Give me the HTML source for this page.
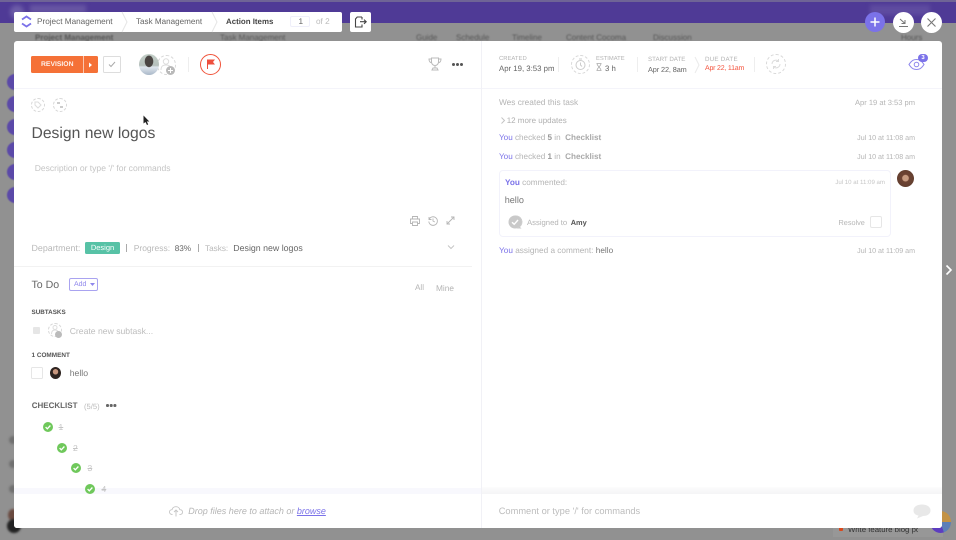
<!DOCTYPE html>
<html><head><meta charset="utf-8"><style>
html,body{margin:0;padding:0;width:956px;height:540px;overflow:hidden;background:#919191;font-family:"Liberation Sans",sans-serif;text-rendering:geometricPrecision}
#r{position:relative;width:956px;height:540px;overflow:hidden;filter:blur(.3px)}
.a{position:absolute;white-space:nowrap}
.g{color:#b4b4b4}.p{color:#7b72e9}
svg{position:absolute;overflow:visible}
.c{border-radius:50%}
.dash{position:absolute;border:1px dashed #d8d8d8;border-radius:50%;box-sizing:border-box}
.sep{position:absolute;width:1px;background:#eee}
.bk{font-size:8px;color:#555;top:33px;filter:blur(.8px)}
.pu{left:7px;width:16px;height:16px;background:#5b49a8;filter:blur(.6px)}
</style></head><body><div id="r">
<div class="a" style="left:0;top:0;width:956px;height:23px;background:#4f3a96"></div>
<div class="a" style="left:0;top:0;width:956px;height:2px;background:#6f6496"></div>
<div class="a" style="left:10px;top:5px;width:14px;height:14px;border-radius:50%;background:#6d5da8;filter:blur(2px)"></div>
<div class="a" style="left:30px;top:5px;width:56px;height:8px;background:#6756a3;filter:blur(2px)"></div>
<div class="a" style="left:870px;top:5px;width:60px;height:10px;background:#5f4ca0;filter:blur(2px)"></div>
<div class="a bk" style="left:35px;font-weight:bold">Project Management</div>
<div class="a bk" style="left:220px">Task Management</div>
<div class="a bk" style="left:416px">Guide</div>
<div class="a bk" style="left:456px">Schedule</div>
<div class="a bk" style="left:512px">Timeline</div>
<div class="a bk" style="left:566px">Content Cocoma</div>
<div class="a bk" style="left:653px">Discussion</div>
<div class="a bk" style="left:901px">Hours</div>
<div class="a c pu" style="top:74px"></div>
<div class="a c pu" style="top:96px"></div>
<div class="a c pu" style="top:119px"></div>
<div class="a c pu" style="top:142px"></div>
<div class="a c pu" style="top:164px"></div>
<div class="a c pu" style="top:187px"></div>
<div class="a c" style="left:9px;top:436px;width:8px;height:8px;background:#707070;filter:blur(1px)"></div>
<div class="a c" style="left:9px;top:460px;width:8px;height:8px;background:#707070;filter:blur(1px)"></div>
<div class="a c" style="left:9px;top:485px;width:8px;height:8px;background:#707070;filter:blur(1px)"></div>
<div class="a c" style="left:8px;top:509px;width:10px;height:12px;background:#6a4a40;filter:blur(1px)"></div>
<div class="a c" style="left:7px;top:519px;width:14px;height:14px;background:#222;filter:blur(1px)"></div>

<!-- outside bottom-right, behind modal -->
<div class="a" style="left:833px;top:526px;width:110px;height:11px;background:#979797"></div>
<div class="a" style="left:839px;top:527px;width:4px;height:4px;background:#d9481c;border-radius:1px"></div>
<div class="a" style="left:848px;top:524.500px;font-size:7.800px;color:#333;width:70px;overflow:hidden">Write feature blog post</div>
<div class="a c" style="left:930px;top:511px;width:21px;height:22px;background:conic-gradient(#c39245 0 25%,#5d7fb8 25% 45%,#5d3dc0 45% 80%,#c39245 80%)"></div>

<!-- breadcrumb -->
<div class="a" style="left:14px;top:12px;width:328px;height:20px;background:#fff;border-radius:2px"></div>
<svg style="left:20px;top:15px" width="13" height="13" viewBox="0 0 13 13"><path d="M2 4.500L6.500 1.500L11 4.500" fill="none" stroke="#7b72e9" stroke-width="1.800"/><path d="M2 8.500L6.500 11.500L11 8.500" fill="none" stroke="#7b72e9" stroke-width="1.800"/></svg>
<div class="a" style="left:37px;top:16.500px;font-size:8.200px;color:#666">Project Management</div>
<svg style="left:121px;top:12px" width="8" height="20"><path d="M1 0L6 10L1 20" fill="none" stroke="#e6e6e6"/></svg>
<div class="a" style="left:136px;top:16.500px;font-size:8.100px;color:#666">Task Management</div>
<svg style="left:211px;top:12px" width="8" height="20"><path d="M1 0L6 10L1 20" fill="none" stroke="#e6e6e6"/></svg>
<div class="a" style="left:226px;top:16.500px;font-size:7.900px;color:#444;font-weight:bold">Action Items</div>
<div class="a" style="left:290px;top:16px;width:20px;height:11px;border:1px solid #efeffa;box-sizing:border-box;border-radius:2px"></div>
<div class="a" style="left:298.500px;top:16.500px;font-size:8.200px;color:#666">1</div>
<div class="a" style="left:316px;top:16.500px;font-size:8.200px;color:#bbb">of 2</div>
<div class="a" style="left:350px;top:12px;width:21px;height:20px;background:#fff;border-radius:2px"></div>
<svg style="left:354px;top:16px" width="13" height="12" viewBox="0 0 13 12"><path d="M8 1H3.200L1.500 3v8h6.500V8.500M6 5.700h6M10 3.600l2.200 2.100L10 7.800M8 1v2.500" fill="none" stroke="#444" stroke-width="1.100"/></svg>

<!-- right circle buttons -->
<div class="a c" style="left:865px;top:12px;width:20px;height:20px;background:#7b72e9"></div>
<svg style="left:865px;top:12px" width="20" height="20"><path d="M10 5.500v9M5.500 10h9" stroke="#fff" stroke-width="1.500"/></svg>
<div class="a c" style="left:893px;top:12px;width:21px;height:21px;background:#fff"></div>
<svg style="left:893px;top:12px" width="21" height="21"><path d="M7 7l5 4.500M12 8v3.500H8.500M6 14.500h9" fill="none" stroke="#777" stroke-width="1"/></svg>
<div class="a c" style="left:921px;top:12px;width:21px;height:21px;background:#fff"></div>
<svg style="left:921px;top:12px" width="21" height="21"><path d="M6.500 6.500l8 8M14.500 6.500l-8 8" stroke="#777" stroke-width="1.100"/></svg>

<!-- modal -->
<div class="a" style="left:14px;top:41px;width:928px;height:487px;background:#fff;border-radius:3px"></div>
<div class="a" style="left:14px;top:88px;width:928px;height:1px;background:#f4f4fa"></div>
<div class="a" style="left:481px;top:41px;width:1px;height:487px;background:#f1f1f6"></div>
<div class="a" style="left:14px;top:488px;width:467px;height:6px;background:#f8f8fd"></div>
<div class="a" style="left:482px;top:487px;width:460px;height:7px;background:linear-gradient(#fcfcfc,#f4f4f6)"></div>

<!-- status -->
<div class="a" style="left:31px;top:56px;width:67px;height:17px;background:#f57137;border-radius:1.500px"></div>
<div class="a" style="left:83px;top:56px;width:1px;height:17px;background:#fff;opacity:.6"></div>
<div class="a" style="left:41px;top:61px;font-size:6.800px;color:#fff;font-weight:bold;opacity:.9">REVISION</div>
<svg style="left:88px;top:62px" width="5" height="6"><path d="M1 .5L4 3L1 5.500Z" fill="#fff"/></svg>
<div class="a" style="left:103px;top:56px;width:18px;height:17px;border:1px solid #ddd;box-sizing:border-box;border-radius:1.500px"></div>
<svg style="left:108px;top:61px" width="8" height="7"><path d="M1 3.500L3 5.500L7 1" fill="none" stroke="#aaa" stroke-width="1"/></svg>
<div class="dash" style="left:157px;top:55px;width:19px;height:20px;background:#fff"></div>
<div class="a c" style="left:139px;top:54px;width:20px;height:21px;background:radial-gradient(ellipse at 50% 35%,#4a4543 0 28%,transparent 32%),linear-gradient(#c3cfc8,#b6c0bc 55%,#dfe6ee 62%,#a9b8c8)"></div>
<svg style="left:160px;top:58px" width="12" height="14"><circle cx="6" cy="3.500" r="2.700" fill="none" stroke="#ddd"/><path d="M1 12c0-4 2-5 5-5s5 1 5 5" fill="none" stroke="#ddd"/></svg>
<div class="a c" style="left:166px;top:66px;width:9px;height:9px;background:#b9b9b9"></div>
<svg style="left:166px;top:66px" width="9" height="9"><path d="M4.500 2v5M2 4.500h5" stroke="#fff" stroke-width="1"/></svg>
<div class="sep" style="left:188px;top:57px;height:15px"></div>
<div class="a c" style="left:200px;top:54px;width:21px;height:21px;border:1px solid #f0533a;box-sizing:border-box"></div>
<svg style="left:206px;top:59px" width="11" height="11"><path d="M1 .5h8L7 3l2 2.500H2V10H1Z" fill="#ee4f3d"/></svg>
<svg style="left:428px;top:57px" width="14" height="14" viewBox="0 0 14 14"><path d="M3.500 1h7v4a3.500 3.500 0 0 1-7 0ZM3.500 2H1c0 2.500 1 3.500 2.700 3.800M10.500 2H13c0 2.500-1 3.500-2.700 3.800M7 8.500V11M4 13l1-2h4l1 2Z" fill="none" stroke="#bbb" stroke-width="1"/></svg>
<div class="a" style="left:452px;top:63px;width:3px;height:3px;border-radius:50%;background:#555;box-shadow:4px 0 #555,8px 0 #555"></div>

<!-- header right -->
<div class="a" style="left:499px;top:55.500px;font-size:5.900px;color:#b4b4b4">CREATED</div>
<div class="a" style="left:499px;top:64px;font-size:7.800px;color:#666">Apr 19, 3:53 pm</div>
<div class="sep" style="left:558px;top:57px;height:15px"></div>
<div class="dash" style="left:571px;top:55px;width:19px;height:19px"></div>
<svg style="left:574px;top:58px" width="13" height="13"><circle cx="6.500" cy="7" r="4.500" fill="none" stroke="#ccc"/><path d="M6.500 4.500V7L8 8.500M5 1h3" fill="none" stroke="#ccc"/></svg>
<div class="a" style="left:596px;top:55.500px;font-size:5.800px;color:#b4b4b4">ESTIMATE</div>
<svg style="left:596px;top:63px" width="6" height="8"><path d="M.5 .5h5M.5 7.500h5M1 .5c0 2.500 4 4.500 4 7M5 .5c0 2.500-4 4.500-4 7" fill="none" stroke="#aaa" stroke-width=".8"/></svg>
<div class="a" style="left:605px;top:64px;font-size:7.800px;color:#666">3 h</div>
<div class="sep" style="left:637px;top:57px;height:15px"></div>
<div class="a" style="left:648px;top:56px;font-size:6.200px;color:#b4b4b4">START DATE</div>
<div class="a" style="left:648px;top:64.500px;font-size:7.300px;color:#666;letter-spacing:-.1px">Apr 22, 8am</div>
<svg style="left:694px;top:57px" width="6" height="16"><path d="M1 0L5 8L1 16" fill="none" stroke="#eaeaea"/></svg>
<div class="a" style="left:705px;top:56px;font-size:6.200px;color:#b4b4b4;letter-spacing:.25px">DUE DATE</div>
<div class="a" style="left:705px;top:64.500px;font-size:7px;color:#f4533d;letter-spacing:-.2px">Apr 22, 11am</div>
<div class="sep" style="left:754px;top:57px;height:15px"></div>
<div class="dash" style="left:766px;top:54px;width:20px;height:20px"></div>
<svg style="left:771px;top:59px" width="10" height="10"><path d="M1 5a4 4 0 0 1 6.500-3M9 5a4 4 0 0 1-6.500 3M7.500 0v2.500H5M2.500 10V7.500H5" fill="none" stroke="#ddd"/></svg>
<svg style="left:908px;top:58px" width="18" height="13"><path d="M1 6.500C4 2 6 1.500 8.500 1.500S13 2 16 6.500C13 11 11 11.500 8.500 11.500S4 11 1 6.500Z" fill="none" stroke="#8f87ec" stroke-width="1.100"/><circle cx="8.500" cy="6.500" r="2.300" fill="none" stroke="#8f87ec"/></svg>
<div class="a" style="left:918px;top:54px;width:10px;height:8px;background:#7b72e9;border-radius:4px;color:#fff;font-size:6px;line-height:8px;text-align:center;font-weight:bold">3</div>

<!-- left content -->
<div class="dash" style="left:31px;top:98px;width:14px;height:14px"></div>
<svg style="left:34px;top:101px" width="8" height="8"><path d="M1 1h3l3 3-3 3-3-3Z" fill="none" stroke="#ddd"/></svg>
<div class="dash" style="left:53px;top:98px;width:14px;height:14px"></div>
<svg style="left:56px;top:101px" width="8" height="8"><path d="M1 1h3v2H1ZM4 5h3v2H4Z" fill="#ccc"/></svg>
<svg style="left:143px;top:115px" width="7" height="11"><path d="M.5 .5V8.500L2.500 7L4 10L5.200 9.400L3.800 6.500H6.300Z" fill="#222"/></svg>
<div class="a" style="left:31.500px;top:124.500px;font-size:15.700px;color:#555">Design new logos</div>
<div class="a" style="left:34.700px;top:163px;font-size:8.550px;color:#c4c4c4">Description or type '/' for commands</div>
<svg style="left:410px;top:216px" width="10" height="10"><path d="M2.500 3V.5h5V3M2.500 7.500H.5V3h9v4.500h-2M2.500 6h5v3.500h-5Z" fill="none" stroke="#b5b5b5" stroke-width=".9"/></svg>
<svg style="left:428px;top:216px" width="10" height="10"><path d="M1.200 3.200A4.300 4.300 0 1 1 .8 5.500M1 1v2.500h2.500M5 2.500V5l1.800 1" fill="none" stroke="#b5b5b5" stroke-width=".9"/></svg>
<svg style="left:446px;top:216px" width="9" height="9"><path d="M1 8L8 1M5 1h3v3M1 5v3h3" fill="none" stroke="#b5b5b5" stroke-width=".9"/></svg>
<div class="a" style="left:31.500px;top:243px;font-size:8.900px;color:#b9b9b9">Department:</div>
<div class="a" style="left:85px;top:242px;width:35px;height:11.500px;background:#57c2a6;border-radius:1.500px;color:#fff;font-size:7.500px;line-height:11.500px;text-align:center">Design</div>
<div class="a" style="left:126px;top:244px;width:1px;height:8px;background:#aaa"></div>
<div class="a" style="left:133.700px;top:243px;font-size:8.500px;color:#b9b9b9">Progress:</div>
<div class="a" style="left:174.700px;top:243.500px;font-size:8.200px;color:#666">83%</div>
<div class="a" style="left:198px;top:244px;width:1px;height:8px;background:#aaa"></div>
<div class="a" style="left:205px;top:243.500px;font-size:8.200px;color:#b9b9b9">Tasks:</div>
<div class="a" style="left:233.300px;top:243px;font-size:8.800px;color:#666">Design new logos</div>
<svg style="left:447px;top:245px" width="8" height="5"><path d="M1 .5L4 3.500L7 .5" fill="none" stroke="#c5c5c5"/></svg>
<div class="a" style="left:14px;top:266px;width:458px;height:1px;background:#f2f2f2"></div>

<div class="a" style="left:31.500px;top:278.500px;font-size:10.600px;color:#666">To Do</div>
<div class="a" style="left:69px;top:278px;width:29px;height:12.500px;border:1px solid #a9a3f0;box-sizing:border-box;border-radius:2px"></div>
<div class="a" style="left:74px;top:280.500px;font-size:7px;color:#8f87ec">Add</div>
<svg style="left:90px;top:283px" width="5" height="3"><path d="M0 0h5L2.500 3Z" fill="#8f87ec"/></svg>
<div class="a" style="left:415px;top:283px;font-size:8.100px;color:#b5b5b5">All</div>
<div class="a" style="left:436px;top:283px;font-size:8.300px;color:#b5b5b5">Mine</div>

<div class="a" style="left:31.500px;top:308.500px;font-size:6.300px;color:#555;font-weight:bold">SUBTASKS</div>
<div class="a" style="left:33px;top:327px;width:7px;height:7px;background:#e6e6e6;border-radius:1px"></div>
<div class="dash" style="left:48px;top:323px;width:14px;height:14px"></div>
<svg style="left:51px;top:325px" width="8" height="10"><circle cx="4" cy="2.500" r="2" fill="none" stroke="#ddd"/><path d="M.5 9c0-3 1.500-4 3.500-4s3.500 1 3.500 4" fill="none" stroke="#ddd"/></svg>
<div class="a c" style="left:55px;top:331px;width:7px;height:7px;background:#bbb"></div>
<div class="a" style="left:69.700px;top:326px;font-size:8.650px;color:#bdbdbd">Create new subtask...</div>

<div class="a" style="left:31.500px;top:352px;font-size:6.400px;color:#555;font-weight:bold">1 COMMENT</div>
<div class="a" style="left:31px;top:367px;width:12px;height:12px;border:1px solid #e6e6e6;box-sizing:border-box;border-radius:1.500px"></div>
<div class="a c" style="left:50px;top:367px;width:11px;height:12px;background:radial-gradient(circle at 50% 40%,#c9977e 0 28%,#2e2420 32%)"></div>
<div class="a" style="left:69.700px;top:368px;font-size:8.700px;color:#777">hello</div>

<div class="a" style="left:31.700px;top:400.500px;font-size:8px;color:#666;font-weight:bold">CHECKLIST</div>
<div class="a" style="left:84px;top:401.500px;font-size:7.600px;color:#bbb">(5/5)</div>
<div class="a" style="left:106px;top:404px;width:2.500px;height:2.500px;border-radius:50%;background:#666;box-shadow:3.700px 0 #666,7.400px 0 #666"></div>

<svg style="left:43px;top:422px" width="10" height="10"><circle cx="5" cy="5" r="5" fill="#6fc85b"/><path d="M2.600 5.100L4.300 6.800L7.400 3.500" fill="none" stroke="#fff" stroke-width="1.300"/></svg>
<div class="a" style="left:58.500px;top:422px;font-size:8.500px;color:#c4c4c4;text-decoration:line-through">1</div>
<svg style="left:57px;top:443px" width="10" height="10"><circle cx="5" cy="5" r="5" fill="#6fc85b"/><path d="M2.600 5.100L4.300 6.800L7.400 3.500" fill="none" stroke="#fff" stroke-width="1.300"/></svg>
<div class="a" style="left:73px;top:443px;font-size:8.500px;color:#c4c4c4;text-decoration:line-through">2</div>
<svg style="left:71px;top:463px" width="10" height="10"><circle cx="5" cy="5" r="5" fill="#6fc85b"/><path d="M2.600 5.100L4.300 6.800L7.400 3.500" fill="none" stroke="#fff" stroke-width="1.300"/></svg>
<div class="a" style="left:87.500px;top:463px;font-size:8.500px;color:#c4c4c4;text-decoration:line-through">3</div>
<svg style="left:85px;top:484px" width="10" height="10"><circle cx="5" cy="5" r="5" fill="#6fc85b"/><path d="M2.600 5.100L4.300 6.800L7.400 3.500" fill="none" stroke="#fff" stroke-width="1.300"/></svg>
<div class="a" style="left:101.500px;top:484px;font-size:8.500px;color:#c4c4c4;text-decoration:line-through">4</div>

<!-- bottom -->
<div class="a" style="left:14px;top:494px;width:928px;height:34px;background:#fff;border-radius:0 0 3px 3px"></div>
<div class="a" style="left:481px;top:494px;width:1px;height:34px;background:#f1f1f6"></div>
<svg style="left:169px;top:506px" width="14" height="11"><path d="M3.500 8.500C1.500 8.500.5 7.300.5 6S1.500 3.700 3 3.700C3.500 1.800 5 .7 7 .7s3.500 1.300 3.800 3c1.700 0 2.700 1 2.700 2.400s-1 2.400-3 2.400M7 4v6.500M5 6l2-2 2 2" fill="none" stroke="#c4c4c4" stroke-width=".9"/></svg>
<div class="a" style="left:188.300px;top:506px;font-size:9px;color:#b5b5b5;font-style:italic">Drop files here to attach or <span style="color:#7b72e9;text-decoration:underline">browse</span></div>
<div class="a" style="left:498.700px;top:506px;font-size:9.300px;color:#bdbdbd">Comment or type '/' for commands</div>
<svg style="left:913px;top:504px" width="18" height="15"><path d="M9 .5C13.500 .5 17.500 2.500 17.500 6.500S13.500 12 10 12L4 14.500L5.500 11.500C2 11 .5 9 .5 6.500C.5 2.500 4.500 .5 9 .5Z" fill="#e8e8e8"/></svg>

<!-- activity -->
<div class="a g" style="left:499px;top:97px;font-size:8.300px">Wes created this task</div>
<div class="a g" style="right:41px;top:98px;font-size:7.550px">Apr 19 at 3:53 pm</div>
<svg style="left:501px;top:117px" width="4" height="7"><path d="M.5 .5L3.500 3.500L.5 6.500" fill="none" stroke="#c4c4c4"/></svg>
<div class="a" style="left:506.700px;top:115.500px;font-size:8px;color:#b0b0b0">12 more updates</div>
<div class="a g" style="left:499px;top:133px;font-size:8.150px"><span class="p">You</span> checked <b style="color:#999">5</b> in &nbsp;<b style="color:#aaa">Checklist</b></div>
<div class="a g" style="right:41px;top:134px;font-size:7.100px">Jul 10 at 11:08 am</div>
<div class="a g" style="left:499px;top:152px;font-size:8.150px"><span class="p">You</span> checked <b style="color:#999">1</b> in &nbsp;<b style="color:#aaa">Checklist</b></div>
<div class="a g" style="right:41px;top:153px;font-size:7.100px">Jul 10 at 11:08 am</div>

<div class="a" style="left:499px;top:170px;width:392px;height:67px;border:1px solid #f2f2fb;box-sizing:border-box;border-radius:4px"></div>
<div class="a g" style="left:505px;top:178px;font-size:8.200px"><b class="p">You</b> commented:</div>
<div class="a" style="right:71px;top:179px;font-size:6.100px;color:#c6c6c6">Jul 10 at 11:09 am</div>
<div class="a" style="left:504.700px;top:194.500px;font-size:9.100px;color:#777">hello</div>
<svg style="left:508px;top:215px" width="14" height="15"><path d="M7 .5a6.500 6.500 0 1 1-.1 13H13.500L12 12A6.500 6.500 0 0 0 7 .5Z" fill="#c9c9c9"/><circle cx="7" cy="7" r="6.500" fill="#c9c9c9"/><path d="M4 7.200L6.200 9.300L10 5" fill="none" stroke="#fff" stroke-width="1.400"/></svg>
<div class="a g" style="left:527px;top:217.500px;font-size:7.700px">Assigned to</div>
<div class="a" style="left:570.700px;top:217.500px;font-size:7.400px;color:#555;font-weight:bold">Amy</div>
<div class="a g" style="left:838.500px;top:217.500px;font-size:7.300px">Resolve</div>
<div class="a" style="left:870px;top:216px;width:12px;height:12px;border:1px solid #e6e6e6;box-sizing:border-box;border-radius:2px"></div>
<div class="a c" style="left:897px;top:170px;width:17px;height:17px;background:radial-gradient(circle at 50% 48%,#c79b80 0 24%,#6e4433 30%,#5a3a2c)"></div>

<div class="a g" style="left:499px;top:246px;font-size:8.240px"><span class="p">You</span> assigned a comment: <span style="color:#777">hello</span></div>
<div class="a g" style="right:41px;top:247px;font-size:7.100px">Jul 10 at 11:09 am</div>

<!-- outside -->
<svg style="left:945px;top:265px" width="8" height="10"><path d="M1.500 .5L6 5L1.500 9.500" fill="none" stroke="#fff" stroke-width="1.600"/></svg>
</div></body></html>
